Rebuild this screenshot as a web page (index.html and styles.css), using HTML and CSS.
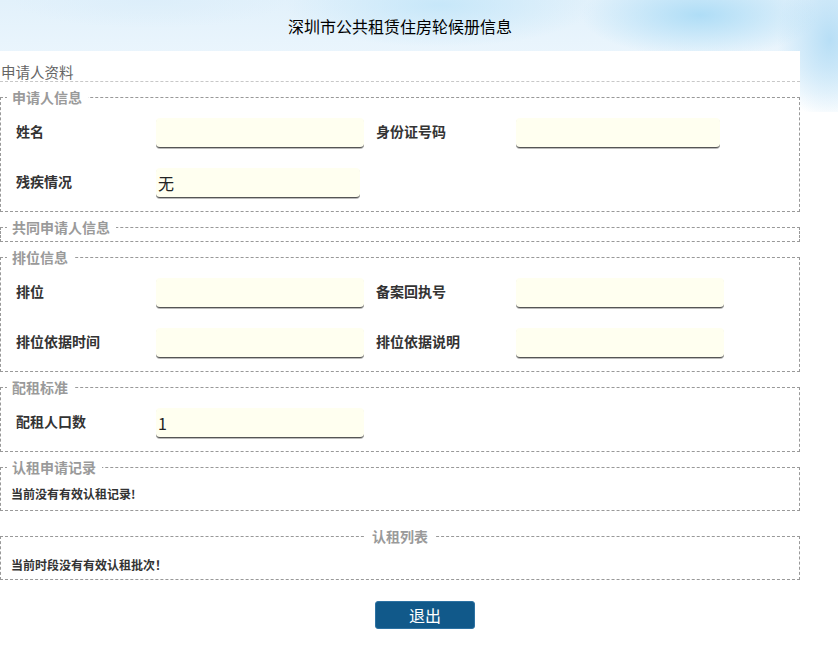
FILE: index.html
```html
<!DOCTYPE html>
<html lang="zh-CN">
<head>
<meta charset="utf-8">
<title>深圳市公共租赁住房轮候册信息</title>
<link rel="stylesheet" href="styles.css">
</head>
<body>
<div class="sky"></div>
<div class="page">
  <header class="title-bar">
    <h1 class="title">深圳市公共租赁住房轮候册信息</h1>
  </header>
  <main class="panel">
    <div class="section-head">申请人资料</div>

    <fieldset class="group">
      <legend class="group-legend">申请人信息</legend>
      <div class="form-grid">
        <label class="f-label">姓名</label>
        <div class="f-cell"><div class="f-input"></div></div>
        <label class="f-label">身份证号码</label>
        <div class="f-cell"><div class="f-input narrow"></div></div>
        <label class="f-label">残疾情况</label>
        <div class="f-cell"><div class="f-input narrow">无</div></div>
      </div>
    </fieldset>

    <fieldset class="group empty">
      <legend class="group-legend">共同申请人信息</legend>
    </fieldset>

    <fieldset class="group">
      <legend class="group-legend">排位信息</legend>
      <div class="form-grid">
        <label class="f-label">排位</label>
        <div class="f-cell"><div class="f-input"></div></div>
        <label class="f-label">备案回执号</label>
        <div class="f-cell"><div class="f-input"></div></div>
        <label class="f-label">排位依据时间</label>
        <div class="f-cell"><div class="f-input"></div></div>
        <label class="f-label">排位依据说明</label>
        <div class="f-cell"><div class="f-input"></div></div>
      </div>
    </fieldset>

    <fieldset class="group">
      <legend class="group-legend">配租标准</legend>
      <div class="form-grid">
        <label class="f-label">配租人口数</label>
        <div class="f-cell"><div class="f-input">1</div></div>
      </div>
    </fieldset>

    <fieldset class="group note">
      <legend class="group-legend">认租申请记录</legend>
      <p class="note-text">当前没有有效认租记录!</p>
    </fieldset>

    <fieldset class="group note list">
      <legend class="group-legend center">认租列表</legend>
      <p class="note-text">当前时段没有有效认租批次！</p>
    </fieldset>

    <div class="actions">
      <button class="btn-exit" type="button">退出</button>
    </div>
  </main>
</div>
</body>
</html>
```

FILE: styles.css
```css
html, body {
  margin: 0;
  padding: 0;
  background: #ffffff;
}
body {
  font-family: "Noto Sans CJK SC", "Microsoft YaHei", sans-serif;
  color: #333;
  position: relative;
  min-height: 649px;
}
.sky {
  position: absolute;
  left: 0;
  top: 0;
  width: 100%;
  height: 112px;
  z-index: 0;
  background:
    radial-gradient(ellipse 170px 60px at 700px 15px, rgba(172,220,246,0.95), rgba(172,220,246,0) 70%),
    radial-gradient(ellipse 220px 60px at 440px 5px, rgba(196,230,249,0.9), rgba(196,230,249,0) 70%),
    radial-gradient(ellipse 70px 110px at 830px 40px, rgba(178,220,245,0.9), rgba(178,220,245,0) 75%),
    radial-gradient(ellipse 200px 40px at 150px 0px, rgba(220,238,250,0.9), rgba(220,238,250,0) 70%),
    linear-gradient(#e2f1fb 0%, #ecf6fd 60%, #ffffff 100%);
}
.page {
  position: relative;
  z-index: 1;
  width: 800px;
}
.title-bar {
  height: 51px;
  display: flex;
  align-items: center;
  justify-content: center;
}
.title {
  margin: 0;
  font-size: 16px;
  font-weight: normal;
  color: #000;
  line-height: 20px;
  padding-top: 1px;
}
.panel {
  background: #fff;
  padding-bottom: 20px;
}
.section-head {
  padding: 12px 0 0 1px;
  font-size: 14.5px;
  line-height: 18px;
  color: #666;
  border-bottom: 1px dashed #c8c8c8;
}
.group {
  margin: 6px 0 0 0;
  padding: 12px 0 13px 0;
  border: 1px dashed #999;
  min-width: 0;
}
.group-legend {
  margin-left: 6px;
  padding: 0 6px 0 5px;
  font-size: 14px;
  font-weight: bold;
  color: #9a9a9a;
  line-height: 18px;
}
.group-legend.center {
  margin-left: auto;
  margin-right: auto;
  padding: 0 8px;
}
.group.empty {
  padding: 0 0 5px 0;
}
.form-grid {
  display: grid;
  grid-template-columns: 140px 220px 140px 220px;
  grid-auto-rows: 30px;
  row-gap: 20px;
  padding-left: 15px;
}
.f-label {
  align-self: start;
  font-size: 14px;
  font-weight: bold;
  color: #333;
  line-height: 26px;
}
.f-cell {
  height: 30px;
}
.f-input {
  box-sizing: border-box;
  width: 208px;
  height: 30px;
  background: #fffff0;
  border-radius: 4px;
  border-bottom: 1px solid #555;
  box-shadow: 0 1px 0 #bbb;
  font-size: 16px;
  line-height: 30px;
  padding-left: 2px;
  color: #222;
}
.f-input.narrow {
  width: 204px;
}
.group.note {
  padding: 10px 0 8px 0;
}
.group.list {
  margin-top: 16px;
  padding: 12px 0 6px 0;
}
.note-text {
  margin: 0;
  padding-left: 10px;
  font-size: 12px;
  font-weight: bold;
  line-height: 16px;
  color: #333;
}
.actions {
  display: flex;
  justify-content: center;
  padding: 21px 0 0 50px;
}
.btn-exit {
  width: 100px;
  height: 28px;
  background: #11598a;
  border: 1px solid #2d72a3;
  border-radius: 3px;
  color: #fff;
  font-family: "Noto Sans CJK SC", "Microsoft YaHei", sans-serif;
  font-size: 16px;
  line-height: 24px;
  padding: 0;
}
```
